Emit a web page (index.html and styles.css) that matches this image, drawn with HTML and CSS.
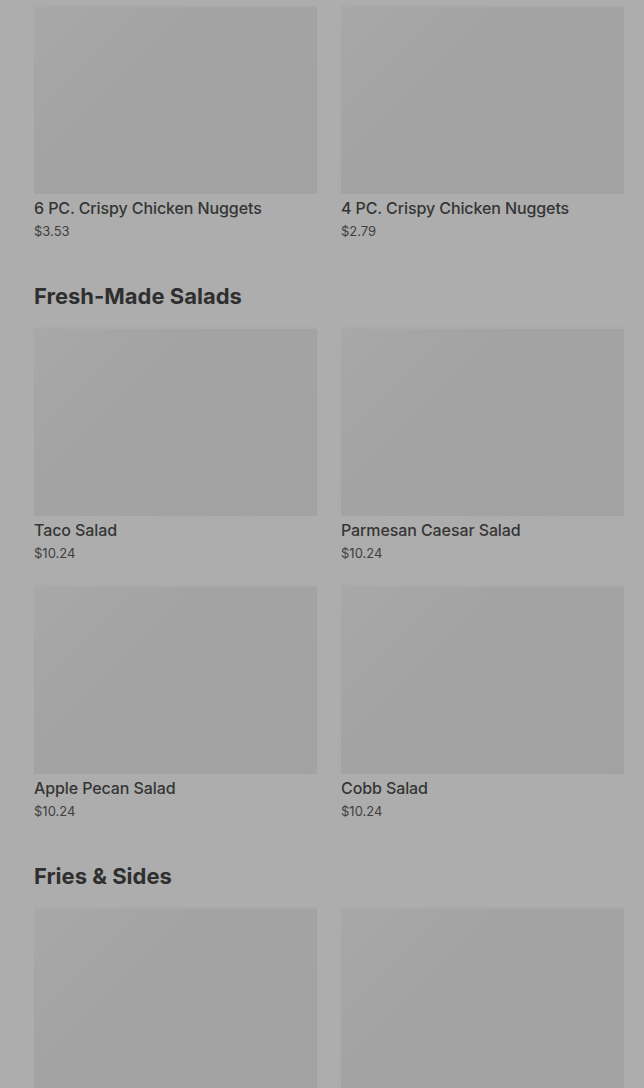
FILE: index.html
```html
<!DOCTYPE html>
<html>
<head>
  <title>Menu</title>
  <link rel="stylesheet" href="styles.css">
</head>
<body>

<div class="menu">
  <section class="section first">
    <div class="grid">
      <div class="item">
        <div class="thumb"></div>
        <div class="name">6 PC. Crispy Chicken Nuggets</div>
        <div class="price">$3.53</div>
      </div>
      <div class="item">
        <div class="thumb"></div>
        <div class="name">4 PC. Crispy Chicken Nuggets</div>
        <div class="price">$2.79</div>
      </div>
    </div>
  </section>

  <section class="section">
    <h2>Fresh-Made Salads</h2>
    <div class="grid">
      <div class="item">
        <div class="thumb"></div>
        <div class="name">Taco Salad</div>
        <div class="price">$10.24</div>
      </div>
      <div class="item">
        <div class="thumb"></div>
        <div class="name">Parmesan Caesar Salad</div>
        <div class="price">$10.24</div>
      </div>
      <div class="item">
        <div class="thumb"></div>
        <div class="name">Apple Pecan Salad</div>
        <div class="price">$10.24</div>
      </div>
      <div class="item">
        <div class="thumb"></div>
        <div class="name">Cobb Salad</div>
        <div class="price">$10.24</div>
      </div>
    </div>
  </section>

  <section class="section">
    <h2>Fries &amp; Sides</h2>
    <div class="grid">
      <div class="item">
        <div class="thumb"></div>
      </div>
      <div class="item">
        <div class="thumb"></div>
      </div>
    </div>
  </section>
</div>

</body>
</html>
```

FILE: styles.css
```css
html, body {
  margin: 0;
  height: 100%;
  overflow: hidden;
}

body {
  font-family: Inter, 'Noto Sans', sans-serif;
  background: #adadad;
  color: #323232;
}

.menu {
  padding: 7px 20px 0 34px;
}

.section h2 {
  margin: 42px 0 19px;
  font-size: 22px;
  line-height: 28px;
  font-weight: 700;
  color: #2f2f2f;
}

.grid {
  display: grid;
  grid-template-columns: 1fr 1fr;
  gap: 25px 24px;
}

.item {
  display: flex;
  flex-direction: column;
}

.thumb {
  height: 187px;
  background: linear-gradient(135deg, #a8a8a8, #a3a3a3 35%, #a2a2a2);
  box-shadow: 0 -2px 2px rgba(0,0,0,0.02);
}

.name {
  margin-top: 4px;
  font-size: 16px;
  line-height: 20px;
  font-weight: 500;
  letter-spacing: -0.1px;
  color: #353535;
}

.price {
  margin-top: 4px;
  font-size: 13px;
  line-height: 18px;
  color: #404040;
}
```
